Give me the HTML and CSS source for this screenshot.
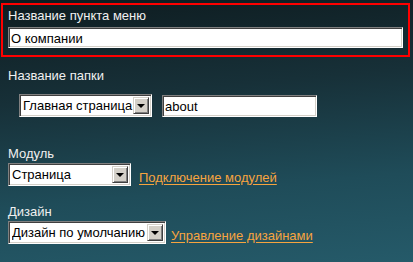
FILE: index.html
```html
<!DOCTYPE html>
<html lang="ru">
<head>
  <meta charset="UTF-8" />
  <title>Пункт меню</title>
  <link rel="stylesheet" href="styles.css">
</head>
<body>

  <form class="menu-form">
    <div class="field field-active">
      <label for="itemName">Название пункта меню</label>
      <input type="text" id="itemName" class="text-input wide" value="О компании" />
    </div>

    <div class="field">
      <label for="folderName">Название папки</label>
      <div class="row indent">
        <div class="select-box parent-select">
          <select><option>Главная страница</option></select>
          <span class="select-btn"></span>
        </div>
        <input type="text" id="folderName" class="text-input folder" value="about" />
      </div>
    </div>

    <div class="field">
      <label>Модуль</label>
      <div class="row">
        <div class="select-box module-select">
          <select><option>Страница</option></select>
          <span class="select-btn"></span>
        </div>
        <a href="#" class="link module-link">Подключение модулей</a>
      </div>
    </div>

    <div class="field">
      <label>Дизайн</label>
      <div class="row">
        <div class="select-box design-select">
          <select><option>Дизайн по умолчанию</option></select>
          <span class="select-btn"></span>
        </div>
        <a href="#" class="link design-link">Управление дизайнами</a>
      </div>
    </div>
  </form>

</body>
</html>
```
FILE: styles.css
```css
html, body {
  height: 100%;
}

body {
  margin: 0;
  font-family: 'Liberation Sans', Arial, sans-serif;
  font-size: 13px;
  color: #f0f0f0;
  background: linear-gradient(175deg, #0e1c20 0%, #173038 35%, #1f4c59 70%, #255a69 100%);
}

.menu-form {
  padding: 3px 3px 0 1px;
}

.field {
  padding: 0 7px;
  margin-bottom: 18px;
}

.field label {
  display: block;
  line-height: 16px;
}

.field-active {
  border: 2px solid #ff0000;
  padding: 3px 5px 7px 5px;
  margin-bottom: 11px;
}

.field-active label {
  margin-bottom: 3px;
}

.row {
  display: flex;
  align-items: center;
  margin-top: 1px;
}

.indent {
  margin-top: 10px;
  padding-left: 11px;
  gap: 10px;
}

.field:nth-child(2) {
  margin-bottom: 29px;
}

/* classic sunken inputs */
.text-input {
  box-sizing: border-box;
  height: 21px;
  margin: 0;
  padding: 1px 2px 0;
  font: inherit;
  color: #000;
  background: #fff;
  border: 1px solid;
  border-color: #808080 #ffffff #ffffff #808080;
  box-shadow: inset 1px 1px #404040, inset -1px -1px #d4d0c8;
  outline: none;
}

.wide {
  width: 395px;
  display: block;
}

.folder {
  width: 155px;
  height: 22px;
}

.select-box {
  box-sizing: border-box;
  display: flex;
  align-items: center;
  height: 23px;
  padding: 2px;
  background: #fff;
  border: 1px solid;
  border-color: #808080 #ffffff #ffffff #808080;
  box-shadow: inset 1px 1px #404040, inset -1px -1px #d4d0c8;
}

.select-box select {
  flex: 1;
  min-width: 0;
  appearance: none;
  -webkit-appearance: none;
  border: 0;
  margin: 0;
  padding: 0 0 0 1px;
  font: inherit;
  color: #000;
  background: transparent;
  outline: none;
}

.select-btn {
  box-sizing: border-box;
  flex: none;
  width: 16px;
  height: 17px;
  background: #d4d0c8;
  border: 1px solid;
  border-color: #d4d0c8 #404040 #404040 #d4d0c8;
  box-shadow: inset 1px 1px #ffffff, inset -1px -1px #808080;
  display: flex;
  align-items: center;
  justify-content: center;
}

.select-btn::after {
  content: "";
  border-left: 4px solid transparent;
  border-right: 4px solid transparent;
  border-top: 4px solid #000;
}

.parent-select { width: 133px; }
.module-select { width: 123px; }
.design-select { width: 158px; }

.link {
  color: #f7a43f;
  text-decoration: underline;
  text-underline-offset: 2px;
  margin-top: 5px;
}

.module-link { margin-left: 8px; }
.design-link { margin-left: 5px; }
```
